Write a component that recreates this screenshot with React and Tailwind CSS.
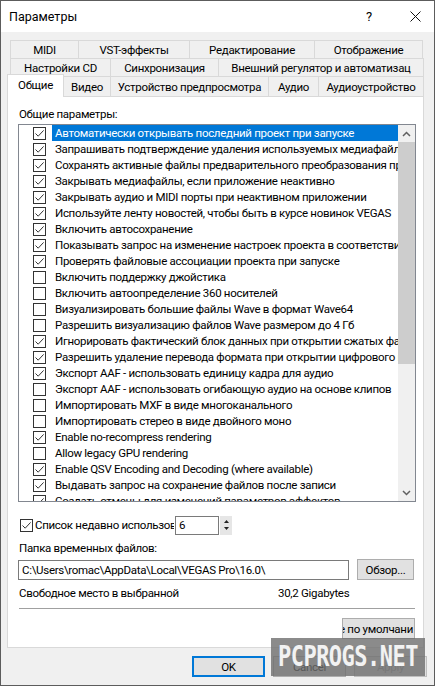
import React from "react";

const options = [
  [true, "Автоматически открывать последний проект при запуске"],
  [true, "Запрашивать подтверждение удаления используемых медиафайлов"],
  [true, "Сохранять активные файлы предварительного преобразования при закрытии"],
  [true, "Закрывать медиафайлы, если приложение неактивно"],
  [true, "Закрывать аудио и MIDI порты при неактивном приложении"],
  [true, "Используйте ленту новостей, чтобы быть в курсе новинок VEGAS"],
  [true, "Включить автосохранение"],
  [true, "Показывать запрос на изменение настроек проекта в соответствии с медиа"],
  [true, "Проверять файловые ассоциации проекта при запуске"],
  [false, "Включить поддержку джойстика"],
  [false, "Включить автоопределение 360 носителей"],
  [false, "Визуализировать большие файлы Wave в формат Wave64"],
  [false, "Разрешить визуализацию файлов Wave размером до 4 Гб"],
  [true, "Игнорировать фактический блок данных при открытии сжатых файлов"],
  [true, "Разрешить удаление перевода формата при открытии цифрового видео"],
  [true, "Экспорт AAF - использовать единицу кадра для аудио"],
  [false, "Экспорт AAF - использовать огибающую аудио на основе клипов"],
  [false, "Импортировать MXF в виде многоканального"],
  [false, "Импортировать стерео в виде двойного моно"],
  [true, "Enable no-recompress rendering"],
  [false, "Allow legacy GPU rendering"],
  [true, "Enable QSV Encoding and Decoding (where available)"],
  [true, "Выдавать запрос на сохранение файлов после записи"],
  [true, "Создать отмены для изменений параметров эффектов"],
];

function Check({ on }) {
  return (
    <span className="w-[13px] h-[13px] shrink-0 border border-[#333333] bg-white flex items-center justify-center">
      {on && (
        <svg width="11" height="11" viewBox="0 0 11 11">
          <path d="M1.5 5.5 L4.2 8.2 L9.6 2.4" fill="none" stroke="#333333" strokeWidth="1" />
        </svg>
      )}
    </span>
  );
}

function Tab({ w, children }) {
  return (
    <div className={"h-full -ml-px first:ml-0 border border-b-0 border-[#d9d9d9] bg-[#f0f0f0] flex items-center justify-center whitespace-nowrap overflow-hidden " + w}>
      {children}
    </div>
  );
}

function Btn({ w, children, main, off }) {
  return (
    <div
      className={
        "h-[21px] flex items-center justify-center bg-[#e1e1e1] " +
        w +
        (main ? " border-2 border-[#0078d7]" : " border border-[#adadad]") +
        (off ? " text-[#a0a0a0] border-[#bfbfbf] bg-[#cccccc]" : "")
      }
    >
      {children}
    </div>
  );
}

export default function App() {
  return (
    <div className="w-[435px] h-[686px] relative overflow-hidden bg-[#f0f0f0] border border-[#5c5c5c] text-[11.5px] tracking-[-0.3px] leading-[16px] text-black font-['Roboto',sans-serif]">
      {/* title bar */}
      <div className="h-[31px] bg-white flex items-center pl-[8px]">
        <span className="flex-1 text-[12.5px] tracking-normal">Параметры</span>
        <span className="w-[14px] text-center text-[13px] mr-[34px]">?</span>
        <svg width="11" height="11" viewBox="0 0 11 11" className="mr-[13px]">
          <path d="M0.5 0.5 L10.5 10.5 M10.5 0.5 L0.5 10.5" stroke="#111" strokeWidth="1" />
        </svg>
      </div>

      {/* tabs */}
      <div className="pt-[8px]">
        <div className="h-[18px] flex ml-[9px]">
          <Tab w="w-[69px]">MIDI</Tab>
          <Tab w="w-[112px]">VST-эффекты</Tab>
          <Tab w="w-[126px]">Редактирование</Tab>
          <Tab w="w-[109px]">Отображение</Tab>
        </div>
        <div className="h-[18px] flex ml-[9px]">
          <Tab w="w-[101px]">Настройки CD</Tab>
          <Tab w="w-[109px]">Синхронизация</Tab>
          <Tab w="w-[206px]">Внешний регулятор и автоматизац</Tab>
        </div>
        <div className="h-[20px] flex items-end ml-[9px]">
          <div className="relative z-10 -ml-[3px] mb-[-1px] h-[23px] w-[57px] border border-b-0 border-[#d9d9d9] bg-white flex items-center justify-center pb-[2px]">
            Общие
          </div>
          <div className="h-full flex -ml-px">
            <Tab w="w-[48px]">Видео</Tab>
            <Tab w="w-[159px]">Устройство предпросмотра</Tab>
            <Tab w="w-[51px]">Аудио</Tab>
            <Tab w="w-[106px]">Аудиоустройство</Tab>
          </div>
        </div>
      </div>

      {/* page */}
      <div className="ml-[6px] w-[417px] h-[552px] border border-[#d9d9d9] bg-white pt-[9px]">
        <div className="pl-[11px] h-[16px]">Общие параметры:</div>

        <div className="mt-[2px] ml-[10px] w-[398px] h-[378px] border border-[#828790] flex overflow-hidden">
          <div className="flex-1 min-w-0 flex flex-col">
            {options.map(([on, label], i) => (
              <div key={i} className="h-[16px] shrink-0 flex items-center pl-[14px]">
                <Check on={on} />
                <span
                  className={
                    "ml-[6px] flex-1 h-[16px] px-[3px] whitespace-nowrap overflow-hidden " +
                    (i === 0 ? "bg-[#0078d7] text-white" : "")
                  }
                >
                  {label}
                </span>
              </div>
            ))}
          </div>
          <div className="w-[17px] shrink-0 bg-[#f0f0f0] flex flex-col">
            <div className="h-[17px] flex items-center justify-center">
              <svg width="9" height="6" viewBox="0 0 9 6">
                <path d="M1 5 L4.5 1.5 L8 5" fill="none" stroke="#606060" strokeWidth="1.5" />
              </svg>
            </div>
            <div className="h-[222px] bg-[#cdcdcd]" />
            <div className="flex-1" />
            <div className="h-[17px] flex items-center justify-center">
              <svg width="9" height="6" viewBox="0 0 9 6">
                <path d="M1 1 L4.5 4.5 L8 1" fill="none" stroke="#606060" strokeWidth="1.5" />
              </svg>
            </div>
          </div>
        </div>

        <div className="mt-[13px] h-[20px] flex items-center pl-[12px]">
          <Check on />
          <span className="ml-[2px] w-[139px] whitespace-nowrap overflow-hidden">Список недавно использованных</span>
          <div className="ml-[1px] w-[44px] h-[19px] border border-[#7a7a7a] pl-[3px] flex items-center">6</div>
          <div className="ml-[1px] w-[12px] h-[19px] bg-[#e6e6e6] flex flex-col items-center justify-around py-[2px]">
            <svg width="5" height="3" viewBox="0 0 5 3"><path d="M0 3 L2.5 0 L5 3 Z" fill="#222" /></svg>
            <svg width="5" height="3" viewBox="0 0 5 3"><path d="M0 0 L2.5 3 L5 0 Z" fill="#222" /></svg>
          </div>
        </div>

        <div className="mt-[5px] pl-[11px] h-[16px]">Папка временных файлов:</div>

        <div className="mt-[3px] ml-[10px] flex items-center">
          <div className="w-[331px] h-[20px] border border-[#7a7a7a] pl-[3px] flex items-center whitespace-nowrap overflow-hidden">
            C:\Users\romac\AppData\Local\VEGAS Pro\16.0\
          </div>
          <div className="ml-[8px]">
            <Btn w="w-[57px]">Обзор...</Btn>
          </div>
        </div>

        <div className="mt-[5px] pl-[11px] h-[16px] flex">
          <span className="w-[162px] whitespace-nowrap overflow-hidden">Свободное место в выбранной папке:</span>
          <span className="ml-[97px]">30,2 Gigabytes</span>
        </div>

        <div className="mt-[7px] ml-[11px] w-[396px] h-px bg-[#a0a0a0]" />

        <div className="mt-[9px] ml-[334px] w-[73px] h-[21px] bg-[#e1e1e1] border border-[#adadad] flex items-center justify-end pr-px overflow-hidden whitespace-nowrap">
          Значение по умолчани
        </div>
      </div>

      {/* dialog buttons */}
      <div className="mt-[8px] flex pl-[191px] gap-[8px]">
        <Btn w="w-[73px]" main>OK</Btn>
        <Btn w="w-[73px]">Cancel</Btn>
        <Btn w="w-[73px]" off>Apply</Btn>
      </div>

      {/* watermark */}
      <div className="absolute left-[270px] top-[637px] w-[154px] h-[38px] bg-[#6e6e6e]/80 flex items-center justify-center overflow-hidden">
        <span className="font-['DejaVu_Sans_Mono',monospace] font-bold text-[22px] tracking-[-0.5px] text-[#f2f2f2] scale-y-[1.3]">
          PCPROGS.NET
        </span>
      </div>
    </div>
  );
}
